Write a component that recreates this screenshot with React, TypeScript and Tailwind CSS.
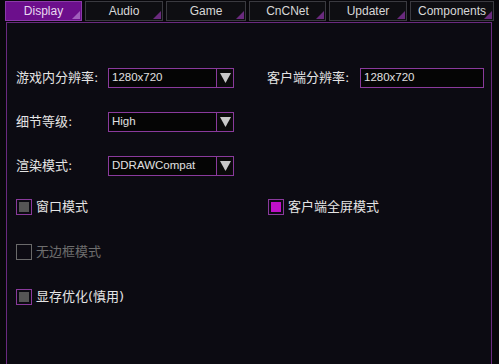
const tabs = ['Display', 'Audio', 'Game', 'CnCNet', 'Updater', 'Components'];

function Tab({ label, active }: { label: string; active?: boolean }) {
  return (
    <div
      className={`relative flex h-[20px] items-center justify-center border font-['Liberation_Sans'] text-[12px] ${
        active ? 'border-[#8a3aa8] bg-[#6c0f8c] text-[#e8d8f0]' : 'border-[#3a3a40] bg-[#0e0e12] text-[#d8d8d8]'
      }`}
    >
      {label}
      <div
        className={`absolute bottom-[1px] right-[1px] h-0 w-0 border-b-[8px] border-l-[8px] border-l-transparent ${
          active ? 'border-b-[#a060bc]' : 'border-b-[#6a2a7e]'
        }`}
      />
    </div>
  );
}

function Dropdown({ value }: { value: string }) {
  return (
    <div className="flex h-[20px] w-[126px]">
      <div className="flex flex-1 items-center border border-[#8a3a9c] bg-[#050505] pl-[3px] font-['Liberation_Sans'] text-[11.5px] text-[#e0e0e0]">
        {value}
      </div>
      <div className="flex w-[17px] items-center justify-center border border-l-0 border-[#8a3a9c] bg-[#0a0a0a]">
        <svg width="11" height="10" viewBox="0 0 11 10">
          <path d="M0 0 L11 0 L5.5 10 Z" fill="#c8c8c8" />
        </svg>
      </div>
    </div>
  );
}

function Check({ label, state }: { label: string; state: 'grey' | 'off' | 'on' }) {
  return (
    <div className="flex h-[18px] items-center gap-[4px]">
      <div
        className={`flex h-[16px] w-[16px] items-center justify-center border ${
          state === 'off' ? 'border-[#6a6a6a]' : 'border-[#8a3a9c]'
        }`}
      >
        {state === 'grey' && <div className="h-[10px] w-[10px] bg-[#555]" />}
        {state === 'on' && <div className="h-[10px] w-[10px] bg-[#c010c8]" />}
      </div>
      <span className={`text-[13px] ${state === 'off' ? 'text-[#6e6e6e]' : 'text-[#e4e4e4]'}`}>{label}</span>
    </div>
  );
}

export default function App() {
  return (
    <div
      className="h-[364px] w-[499px] overflow-hidden bg-[#08070b]"
      style={{ fontFamily: '"DejaVu Sans", "Noto Sans CJK SC", sans-serif' }}
    >
      <div className="grid grid-cols-[77px_78px_80px_77px_78px_84px] gap-[3px] pl-[5px] pt-[1px]">
        {tabs.map((t, i) => (
          <Tab key={t} label={t} active={i === 0} />
        ))}
      </div>
      <div className="ml-[6px] mr-[7px] mt-[1px] h-[400px] border border-[#6a2a80] bg-[#0c0b12] pl-[9px] pr-[7px] pt-[45px]">
        <div className="flex">
          <div className="flex w-[252px] flex-col gap-[24px]">
            <div className="flex items-center">
              <span className="w-[92px] text-[13px] text-[#e4e4e4]">游戏内分辨率:</span>
              <Dropdown value="1280x720" />
            </div>
            <div className="flex items-center">
              <span className="w-[92px] text-[13px] text-[#e4e4e4]">细节等级:</span>
              <Dropdown value="High" />
            </div>
            <div className="flex items-center">
              <span className="w-[92px] text-[13px] text-[#e4e4e4]">渲染模式:</span>
              <Dropdown value="DDRAWCompat" />
            </div>
          </div>
          <div className="flex items-start">
            <div className="flex items-center">
              <span className="w-[93px] text-[13px] text-[#e4e4e4]">客户端分辨率:</span>
              <div className="flex h-[20px] w-[124px] items-center border border-[#8a3a9c] bg-[#050505] pl-[3px] font-['Liberation_Sans'] text-[11.5px] text-[#e0e0e0]">
                1280x720
              </div>
            </div>
          </div>
        </div>
        <div className="mt-[22px] flex">
          <div className="flex w-[252px] flex-col gap-[27px]">
            <Check label="窗口模式" state="grey" />
            <Check label="无边框模式" state="off" />
            <Check label="显存优化(慎用)" state="grey" />
          </div>
          <div className="flex flex-col">
            <Check label="客户端全屏模式" state="on" />
          </div>
        </div>
      </div>
    </div>
  );
}
